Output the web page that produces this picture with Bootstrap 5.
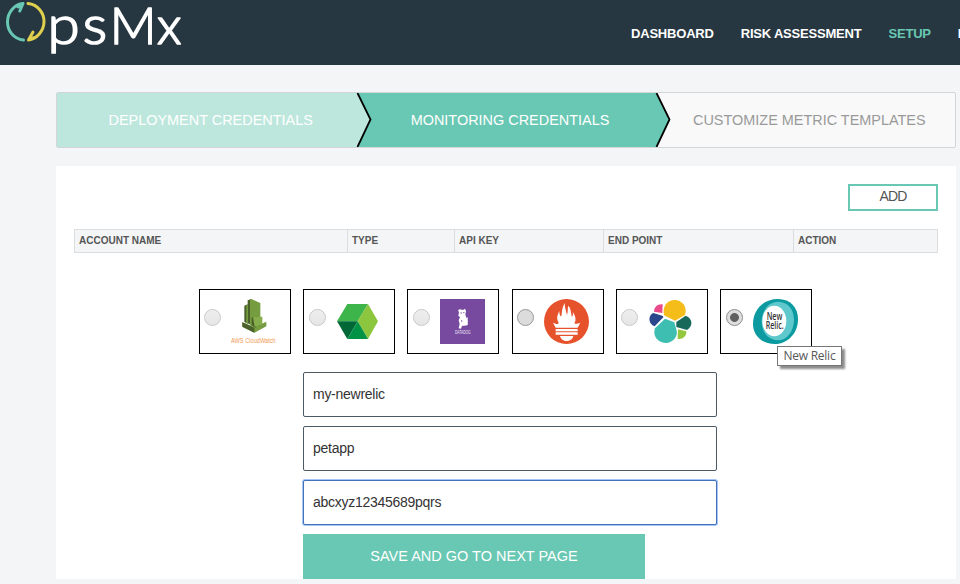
<!DOCTYPE html>
<html lang="en">
<head>
<meta charset="utf-8">
<meta name="viewport" content="width=device-width, initial-scale=1">
<title>OpsMx</title>
<link href="https://cdn.jsdelivr.net/npm/bootstrap@5.3.0/dist/css/bootstrap.min.css" rel="stylesheet">
<style>
body{background:#f4f5f7;font-family:"Liberation Sans",Arial,sans-serif;font-size:14px;color:#333;width:960px;height:584px;overflow:hidden}
.topbar{background:#273741;height:65px;padding:0;overflow:hidden}
.topbar .navbar-nav{margin-left:631px;gap:27px;padding-top:2px}
.topbar .navbar-nav .nav-link{padding:0;color:#fff;font-size:13px;font-weight:700;line-height:20px;white-space:nowrap;letter-spacing:-.2px}
.topbar .navbar-nav .nav-link.active{color:#69c8b3}
.topbar .navbar-brand{position:absolute;left:0;top:0;padding:0;margin:0}
.main-wrap{margin-left:56px;width:900px;padding-top:27px}
.steps{height:56px;border:1px solid #d3d5d7;border-radius:2px;background:#f9f9f9}
.step-item{position:relative;width:300px;font-size:14.45px;color:#999;padding:2px 0 0 8px}
.step-item.done{background:#bde7dc;color:#fff}
.step-item.current{background:#69c8b3;color:#fff}
.step-arrow{position:absolute;left:100%;top:0;z-index:1}
.step-item.current .step-arrow{left:299px}
.panel-box{margin-top:18px;height:413px;padding:18px 18px 0}
.btn-add{width:90px;height:27px;border:2px solid #69c8b3;border-radius:0;padding:0 0 2px;font-size:14px;letter-spacing:-.8px;line-height:21px;color:#555;background:#fff}
.accounts{margin:18px 0 0;table-layout:fixed;width:864px;height:24px;border-color:#dcdddf}
.accounts th{font-size:10px;line-height:14px;padding:4px 4px;background:#f4f5f7;color:#555}
.providers{margin:36px 0 0 125px;gap:12.2px}
.provider{position:relative;width:92px;height:65px;border:1px solid #000;padding-left:4.4px;gap:10px}
.provider:last-child{padding-left:5.2px}
.provider input{appearance:none;width:17px;height:17px;margin:-8px 0 0;flex:none;border-radius:50%;border:1px solid #c9c9c9;background:linear-gradient(#eee,#e6e6e6)}
.provider input.strong{border-color:#989898;background:#dcdcdc}
.provider input:checked{border-color:#8d8d8d;background:radial-gradient(circle,#606060 0 4px,#dedede 4.8px)}
.provider svg{flex:none}
.tip{position:absolute;left:56px;top:56px;width:65px;height:20px;border:1px solid #767676;background:#fff;box-shadow:3px 3px 2px rgba(0,0,0,.45);font:12px/18px "Open Sans",sans-serif;letter-spacing:-.25px;color:#575757;text-align:center;white-space:nowrap;z-index:2}
.fields{width:414px;margin:18px 0 0 229px;gap:9px}
.fields .form-control{height:45px;border:1px solid #4c5a66;border-radius:2px;padding:0 9px 1px;font-size:14px;letter-spacing:-.27px;color:#333}
.fields .form-control.on{border-color:#4272b8;box-shadow:0 0 0 1px #a5c5f7}
.btn-save{width:342px;height:45px;background:#69c8b3;border:0;border-radius:0;color:#fff;font-size:14.5px;padding:1px 0 0}
</style>
</head>
<body>
<nav class="navbar navbar-expand topbar position-relative">
  <a class="navbar-brand" href="#">
    <svg class="d-block" width="190" height="64" viewBox="0 0 190 64" role="img" aria-label="OpsMx">
      <g fill="none" stroke-width="3" stroke-linecap="round" stroke-linejoin="round">
        <path stroke="#69c8b3" d="M23.500 40C13 39 7.500 30 7.500 22C7.500 12 15 4 23 3.500L19.800 11M23 3.500L18 7"/>
        <path stroke="#dfd04d" d="M28 3.500C38 4.500 44 13 44 21.500C44 31 36.500 39 28.500 40L33 32M28.500 40L34 37.500"/>
      </g>
      <g font-family="Lato" font-weight="300" font-size="52" fill="#fff" stroke="#fff" stroke-width="1.700" stroke-linejoin="round">
        <text transform="translate(47.600 43.700) scale(1.120 1.020)">p</text>
        <text transform="translate(82.700 43.700) scale(1.100 1.020)">s</text>
        <text transform="translate(109.700 43.700) scale(.99 1)">M</text>
        <text transform="translate(157 43.700)">x</text>
      </g>
    </svg>
  </a>
  <div class="navbar-nav flex-nowrap">
    <a class="nav-link" href="#">DASHBOARD</a>
    <a class="nav-link" href="#">RISK ASSESSMENT</a>
    <a class="nav-link active" href="#">SETUP</a>
    <a class="nav-link" href="#">P</a>
  </div>
</nav>
<main class="main-wrap">
  <div class="steps d-flex">
    <div class="step-item done d-flex align-items-center justify-content-center"><span>DEPLOYMENT CREDENTIALS</span>
      <svg class="step-arrow" width="16" height="54"><path d="M0 0H1L15 27L1 54H0Z" fill="#bde7dc"/><path d="M1.500 0L14.500 26.500L1.500 54" fill="none" stroke="#000" stroke-width="1.800"/></svg></div>
    <div class="step-item current d-flex align-items-center justify-content-center"><span>MONITORING CREDENTIALS</span>
      <svg class="step-arrow" width="16" height="54"><path d="M0 0H1L14 27L1 54H0Z" fill="#69c8b3"/><path d="M1.500 0L14.500 26.500L1.500 54" fill="none" stroke="#000" stroke-width="1.800"/></svg></div>
    <div class="step-item d-flex align-items-center justify-content-center"><span>CUSTOMIZE METRIC TEMPLATES</span></div>
  </div>
  <section class="panel-box bg-white">
    <div class="d-flex justify-content-end"><button class="btn btn-add">ADD</button></div>
    <table class="table table-bordered accounts">
      <colgroup><col style="width:273px"><col style="width:107px"><col style="width:149px"><col style="width:190px"><col></colgroup>
      <thead><tr><th>ACCOUNT NAME</th><th>TYPE</th><th>API KEY</th><th>END POINT</th><th>ACTION</th></tr></thead>
    </table>
    <div class="providers d-flex">
      <label class="provider d-flex align-items-center"><input type="radio" name="p">
        <svg width="45" height="45" viewBox="0 0 135 135">
          <path fill="#759c3e" d="M34 70L70 84L106 68V82L70 101L34 83Z"/><path fill="#4b612c" d="M34 70L70 86V101L34 83Z"/>
          <path fill="#4b612c" d="M40 20L50 16V74L40 69ZM50 4L61 0V78L50 73Z"/><path fill="#759c3e" d="M46 17L51 19V74L46 72ZM61 0L88 12V80L70 86L57 78V3Z"/>
          <path fill="#4b612c" d="M62 55L74 58V86L62 79Z"/><path fill="#86ad4b" d="M66 55L94 53V74L71 83Z"/>
          <text x="0" y="131" font-size="20" font-family="Liberation Sans" fill="#f09a52" textLength="134" lengthAdjust="spacingAndGlyphs">AWS CloudWatch</text>
        </svg></label>
      <label class="provider d-flex align-items-center"><input type="radio" name="p">
        <svg width="45" height="45" viewBox="0 0 135 135">
          <path fill="#3eb54a" d="M3 67L34 15H96L65 67Z"/><path fill="#8cc63f" d="M96 15L126 67L96 120L65 67Z"/><path fill="#006837" d="M3 67H65L34 120Z"/><path fill="#009245" d="M65 67L96 120H34Z"/>
        </svg></label>
      <label class="provider d-flex align-items-center"><input type="radio" name="p">
        <svg width="45" height="45" viewBox="0 0 135 135">
          <path fill="#774aa0" d="M0 0H135V135H0Z"/><path fill="#fff" d="M54 33L60 31L69 33L75 29L78 36L76 47L80 58L83 53V78L66 80L63 89L56 88L59 75L56 64L60 55L55 50L57 40Z"/>
          <path fill="#774aa0" d="M62 40H65V44H62ZM70 39H73V43H70ZM63 63L69 66L65 70Z"/><path fill="none" stroke="#fff" stroke-width="2" d="M68 64L81 61V78L68 79Z"/>
          <text x="45" y="104" font-size="16" font-family="Liberation Sans" fill="#efe8f5" textLength="47" lengthAdjust="spacingAndGlyphs">DATADOG</text>
        </svg></label>
      <label class="provider d-flex align-items-center"><input class="strong" type="radio" name="p">
        <svg width="45" height="45" viewBox="0 0 135 135">
          <circle cx="67.500" cy="67.500" r="67.500" fill="#e6522c"/>
          <path fill="#fff" d="M27 71C38 76 43 76 44 72C37 58 39 51 46 36C46 48 49 53 52 52C55 40 52 31 62 12C62 25 66 35 69 48C73 37 70 26 73 20C82 30 80 41 84 54C88 47 87 42 86 38C97 55 96 65 91 72C94 76 99 75 109 71L101 86H35ZM35 90H101V97H35ZM35 100H101V107H35ZM48 111H88C86 121 77 126 68 126C59 126 50 120 48 111Z"/>
        </svg></label>
      <label class="provider d-flex align-items-center"><input type="radio" name="p">
        <svg width="45" height="45" viewBox="-2 0 135 135">
          <path fill="#f4bd19" d="M46 49C41 25 53 4 76 3C101 2 117 24 109 48L79 65Z"/><path fill="#ec4b8b" d="M16 38C16 24 27 14 42 16L41 42Z"/>
          <path fill="#2b478b" d="M14 42L43 51L44 55L18 82C0 77-4 50 14 42Z"/><path fill="#3dbeb1" d="M49 59L77 70L84 95C88 112 73 131 51 132C26 132 11 109 19 88Z"/>
          <path fill="#17695a" d="M111 50C132 57 134 82 115 93L83 84V69Z"/><path fill="#93c83e" d="M88 91L113 97C114 112 102 122 87 120Z"/>
        </svg></label>
      <label class="provider d-flex align-items-center"><input type="radio" name="p" checked>
        <svg width="45" height="45" viewBox="0 0 135 135">
          <path fill="#0a9a9f" d="M75 0C112 0 135 26 135 60C135 103 104 135 66 135C25 135 0 108 0 74C0 32 31 0 75 0Z"/>
          <path fill="#5fc8cd" d="M76 8C106 9 124 32 123 65C122 99 100 124 75 124C44 122 25 98 26 65C28 31 48 8 76 8Z"/>
          <ellipse cx="64" cy="66" rx="36" ry="46" fill="#fff"/>
          <g font-family="Open Sans" font-weight="600" font-size="31" fill="#333"><text x="41" y="62" textLength="47" lengthAdjust="spacingAndGlyphs">New</text><text x="38" y="91" textLength="54" lengthAdjust="spacingAndGlyphs">Relic.</text></g>
        </svg><span class="tip">New Relic</span></label>
    </div>
    <form class="fields d-flex flex-column">
      <input class="form-control" value="my-newrelic" aria-label="Account name">
      <input class="form-control" value="petapp" aria-label="Application">
      <input class="form-control on" value="abcxyz12345689pqrs" aria-label="API key">
      <button type="button" class="btn btn-save">SAVE AND GO TO NEXT PAGE</button>
    </form>
  </section>
</main>
<script src="https://cdn.jsdelivr.net/npm/bootstrap@5.3.0/dist/js/bootstrap.bundle.min.js"></script>
</body>
</html>
